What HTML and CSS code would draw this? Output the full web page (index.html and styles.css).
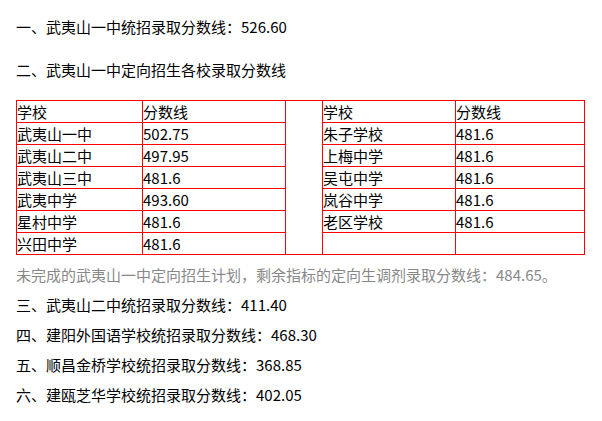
FILE: index.html
```html
<!DOCTYPE html>
<html lang="zh-CN">
<head>
<meta charset="utf-8">
<link rel="stylesheet" href="styles.css">
</head>
<body>
<div class="page">
  <p class="line first">一、武夷山一中统招录取分数线：526.60</p>
  <p class="line second">二、武夷山一中定向招生各校录取分数线</p>
  <table class="scores">
    <colgroup>
      <col class="c1"><col class="c2"><col class="c3"><col class="c4"><col class="c5">
    </colgroup>
    <tr><td>学校</td><td>分数线</td><td rowspan="7"></td><td>学校</td><td>分数线</td></tr>
    <tr><td>武夷山一中</td><td>502.75</td><td>朱子学校</td><td>481.6</td></tr>
    <tr><td>武夷山二中</td><td>497.95</td><td>上梅中学</td><td>481.6</td></tr>
    <tr><td>武夷山三中</td><td>481.6</td><td>吴屯中学</td><td>481.6</td></tr>
    <tr><td>武夷中学</td><td>493.60</td><td>岚谷中学</td><td>481.6</td></tr>
    <tr><td>星村中学</td><td>481.6</td><td>老区学校</td><td>481.6</td></tr>
    <tr><td>兴田中学</td><td>481.6</td><td></td><td></td></tr>
  </table>
  <p class="line note">未完成的武夷山一中定向招生计划，剩余指标的定向生调剂录取分数线：484.65。</p>
  <p class="line">三、武夷山二中统招录取分数线：411.40</p>
  <p class="line">四、建阳外国语学校统招录取分数线：468.30</p>
  <p class="line">五、顺昌金桥学校统招录取分数线：368.85</p>
  <p class="line">六、建瓯芝华学校统招录取分数线：402.05</p>
</div>
</body>
</html>
```

FILE: styles.css
```css
html, body {
  margin: 0;
  padding: 0;
  background: #ffffff;
}
body {
  font-family: "Noto Sans CJK SC", "Noto Sans", sans-serif;
  font-size: 15px;
  color: #000000;
}
.page {
  padding: 12px 16px 0 16px;
}
.line {
  margin: 0;
  line-height: 30px;
  white-space: nowrap;
}
.second {
  margin-top: 13px;
}
.scores {
  margin-top: 15px;
  border-collapse: collapse;
  table-layout: fixed;
  width: 569px;
}
.c1 { width: 126px; }
.c2 { width: 143px; }
.c3 { width: 37px; }
.c4 { width: 133px; }
.c5 { width: 129px; }
.scores td {
  border: 1px solid #ff0000;
  padding: 0;
  height: 21px;
  line-height: 21px;
  text-align: left;
  vertical-align: middle;
  white-space: nowrap;
}
.note {
  margin-top: 5px;
  color: #888888;
}
```
